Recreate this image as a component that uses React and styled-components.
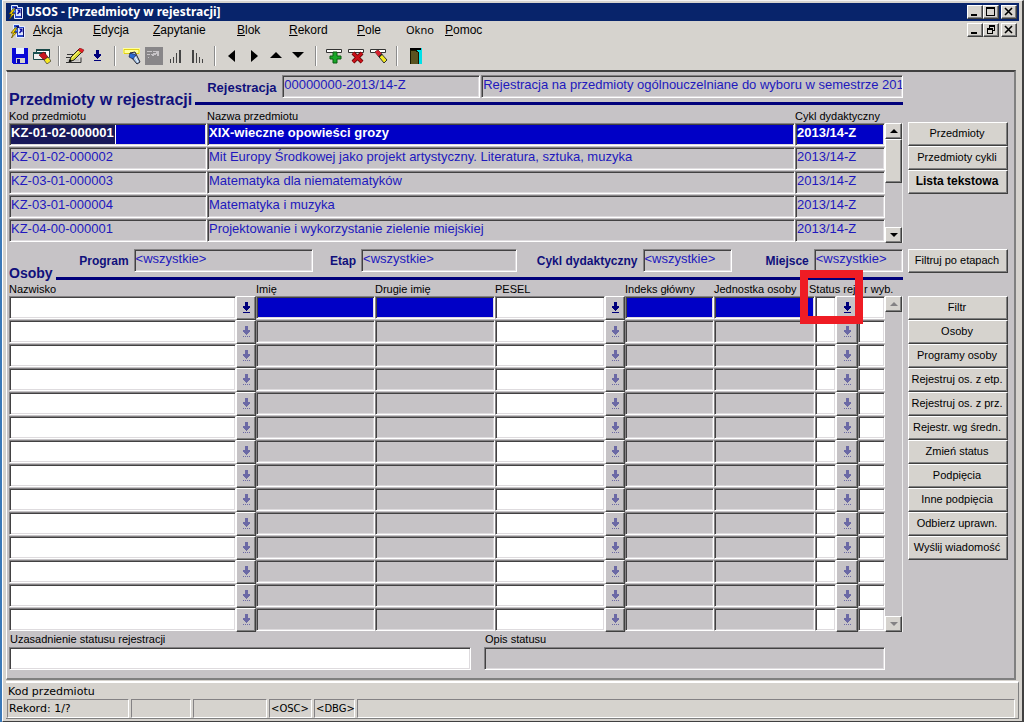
import React from 'react'
import styled, { createGlobalStyle, css } from 'styled-components'

const GlobalStyle = createGlobalStyle`
  * {
    box-sizing: border-box;
  }
  body {
    margin: 0;
    background: #3a78b8;
    font-family: "Liberation Sans", Arial, sans-serif;
    font-size: 11px;
    color: #000;
  }
  button, input {
    font: inherit;
    margin: 0;
    border-radius: 0;
  }
`

const raised = css`
  border: 1px solid;
  border-color: #fff #404040 #404040 #fff;
  box-shadow: inset -1px -1px 0 #808080;
`

const sunken = css`
  border: 1px solid;
  border-color: #848284 #fff #fff #848284;
  box-shadow: inset 1px 1px 0 #424142, inset -1px -1px 0 #dedbde;
`

const Window = styled.div`
  min-height: 100vh;
  margin-left: 2px;
  padding: 2px 3px 0;
  display: flex;
  flex-direction: column;
  background: #d6d3ce;
  border-top: 1px solid #f2f2f2;
  border-left: 1px solid #fff;
  border-right: 2px solid #404040;
  border-bottom: 1px solid #404040;
`

const TitleBar = styled.header`
  display: flex;
  align-items: center;
  height: 18px;
  padding: 0 2px 0 2px;
  background: #08246b;
  color: #fff;
`

const TitleText = styled.h1`
  flex: 1;
  margin: 0 0 0 2px;
  font-family: "Noto Sans", sans-serif;
  font-size: 12px;
  font-weight: bold;
  line-height: 18px;
`

const WindowButtons = styled.div`
  display: flex;
  margin-left: auto;
`

const WindowButton = styled.button`
  ${raised}
  width: 16px;
  height: 14px;
  padding: 0;
  background: #d6d3ce;
  display: flex;
  align-items: center;
  justify-content: center;
  &:last-child {
    margin-left: 2px;
  }
`

const MenuBar = styled.nav`
  display: flex;
  align-items: flex-start;
  height: 21px;
  padding: 2px 2px 0 4px;
`

const MenuItem = styled.button`
  width: ${props => props.$width}px;
  padding: 0;
  border: 0;
  background: none;
  text-align: left;
  white-space: nowrap;
  font-family: ${props => props.$system ? '"Noto Sans", sans-serif' : 'inherit'};
  font-size: ${props => props.$system ? 11 : 12}px;
  line-height: 14px;
  &:first-of-type {
    margin-left: 7px;
  }
`

const ToolBar = styled.div`
  display: flex;
  align-items: center;
  height: 28px;
  padding-left: 3px;
`

const ToolGroup = styled.div`
  display: flex;
  gap: 1px;
`

const ToolButton = styled.button`
  width: 21px;
  height: 22px;
  padding: 0;
  border: 0;
  background: none;
  display: flex;
  align-items: center;
  justify-content: center;
`

const Separator = styled.div`
  width: 2px;
  height: 20px;
  margin: 0 ${props => props.$wide ? 7 : 5}px 0 ${props => props.$wide ? 7 : 6}px;
  border-left: 1px solid #8c8c8c;
  border-right: 1px solid #fff;
`

const Canvas = styled.main`
  flex: 1;
  margin-right: 3px;
  padding: 3px 6px 0 2px;
  background: #c6c3c6;
  border-top: 2px solid #404040;
  border-left: 1px solid #fff;
  border-right: 2px solid #808080;
  border-bottom: 2px solid #808080;
`

const Section = styled.section`
  display: flex;
  gap: 5px;
`

const SectionBody = styled.div`
  flex: 1;
  min-width: 0;
`

const Side = styled.aside`
  width: 100px;
  display: flex;
  flex-direction: column;
  padding-top: ${props => props.$top}px;
`

const SideButton = styled.button`
  ${raised}
  height: 24px;
  padding: 0 2px 2px 0;
  background: #d6d3ce;
  white-space: nowrap;
  font-size: ${props => props.$strong ? 12 : 11}px;
  font-weight: ${props => props.$strong ? 'bold' : 'normal'};
`

const BlockHead = styled.div`
  display: flex;
  align-items: flex-end;
  gap: 3px;
`

const BlockTitle = styled.h2`
  margin: 0;
  color: #10107b;
  font-size: ${props => props.$small ? 14 : 16}px;
  line-height: ${props => props.$small ? 14 : 10}px;
  white-space: nowrap;
`

const BlockFields = styled.div`
  flex: 1;
  min-width: 0;
  border-bottom: 3px solid #00007b;
`

const fieldLabel = css`
  color: #10107b;
  font-weight: bold;
  white-space: nowrap;
`

const Registration = styled.div`
  display: flex;
  align-items: center;
  padding: 0 0 3px 12px;
`

const RegistrationLabel = styled.label`
  ${fieldLabel}
  width: 75px;
  font-size: 13px;
`

const Filters = styled.div`
  display: grid;
  grid-template-columns: 78px 179fr 48px 155fr 126px 89fr 82px 89fr;
  align-items: center;
  padding-bottom: 4px;
`

const FilterLabel = styled.label`
  ${fieldLabel}
  padding-right: 5px;
  text-align: right;
  font-size: 12px;
`

const Field = styled.input`
  ${sunken}
  display: block;
  width: ${props => props.$width ? props.$width + 'px' : '100%'};
  min-width: 0;
  height: 23px;
  margin-bottom: 1px;
  padding: 0 0 4px 1px;
  background: ${props => props.$editable ? '#fff' : '#c6c3c6'};
  color: #2118bd;
  font-size: 13px;
  outline: none;
  ${props => props.$current && css`
    background: #0000c6;
    color: #fff;
    font-weight: bold;
  `}
  ${props => props.$selected && css`
    background: linear-gradient(90deg, #18185a 105px, #fff 105px, #fff 106px, #0000c6 106px);
  `}
`

const WideField = styled(Field)`
  flex: 1;
  width: auto;
  margin-left: 1px;
`

const GridArea = styled.div`
  position: relative;
  display: flex;
  align-items: flex-end;
`

const Grid = styled.table`
  flex: 1;
  width: 100%;
  min-width: 0;
  table-layout: fixed;
  border-collapse: collapse;
  td, th {
    padding: 0;
  }
`

const HeadCell = styled.th`
  && {
    padding: 0 0 1px ${props => props.$indent || 0}px;
  }
  height: ${props => props.$height || 14}px;
  font-weight: normal;
  text-align: left;
  vertical-align: bottom;
  line-height: 12px;
  white-space: nowrap;
`

const ListButton = styled.button`
  ${raised}
  display: flex;
  align-items: center;
  justify-content: center;
  width: 100%;
  height: 24px;
  padding: 0 0 1px 1px;
  background: #c6c3c6;
`

const ScrollBar = styled.div`
  width: 18px;
  height: ${props => props.$height}px;
  display: flex;
  flex-direction: column;
  background: #c6c3c6;
  border-right: 1px solid #eee;
`

const ScrollButton = styled.button`
  ${raised}
  height: 16px;
  padding: 0;
  background: #d6d3ce;
  display: flex;
  align-items: center;
  justify-content: center;
`

const ScrollTrack = styled.div`
  flex: 1;
`

const ScrollThumb = styled.div`
  ${raised}
  height: 44px;
  background: #d6d3ce;
`

const Highlight = styled.div`
  position: absolute;
  top: -10px;
  right: 40px;
  width: 63px;
  height: 54px;
  border: 8px solid #ef1c24;
  pointer-events: none;
`

const Notes = styled.div`
  display: grid;
  grid-template-columns: 462fr 401fr;
  column-gap: 13px;
  padding: 0 123px 5px 0;
`

const NoteLabel = styled.label`
  display: block;
  padding-left: 1px;
  line-height: 15px;
`

const StatusArea = styled.footer`
  margin-top: 1px;
  border-top: 2px solid #fff;
  border-right: 1px solid #808080;
  border-bottom: 1px solid #808080;
  padding-right: 3px;
  margin-bottom: 2px;
  font-family: "DejaVu Sans", sans-serif;
  font-size: 11px;
`

const Hint = styled.div`
  padding-left: 2px;
  height: 16px;
  line-height: 18px;
`

const StatusBar = styled.div`
  display: flex;
  gap: 2px;
  padding-left: 1px;
`

const StatusCell = styled.div`
  ${props => props.$width ? `width: ${props.$width}px;` : 'flex: 1;'}
  height: 19px;
  padding-left: 1px;
  border: 1px solid;
  border-color: #848284 #fff #fff #848284;
  line-height: 17px;
  font-size: ${props => props.$small ? 10 : 11}px;
  white-space: nowrap;
`

const AppIcon = () => (
  <svg width="16" height="16" viewBox="0 0 16 16">
    <path d="M3.500 1.500h6v2h5v11h-8v-4h-3z" fill="#2848c8" stroke="#e8f0ff" />
    <path d="M6 3h3v2H6zM13 5h1v9h-1z" fill="#10106b" />
    <path d="M8 5h5v7H8z" fill="#dfe8ff" />
    <path d="M9 5.500h3.500v4l-1-1-1.500 2-1-1 1.500-2z" fill="#0808a0" />
    <path d="M4 4h3v4H4z" fill="#68a8d8" />
    <path d="M5 5L1 10h2.500L1.500 15 6.500 9.500H4L7 5z" fill="#ffdf00" stroke="#5a4300" strokeWidth=".7" />
  </svg>
)

const MinimizeIcon = () => (
  <svg width="10" height="10" viewBox="0 0 10 10"><path d="M1 7h6v2H1z" /></svg>
)

const MaximizeIcon = () => (
  <svg width="10" height="10" viewBox="0 0 10 10" shapeRendering="crispEdges"><path d="M0 0h9v9H0zM1 2v6h7V2z" fillRule="evenodd" /></svg>
)

const RestoreIcon = () => (
  <svg width="10" height="10" viewBox="0 0 10 10" shapeRendering="crispEdges">
    <path d="M3 0h6v6H7V5h1V2H4v1H3zM1 3h6v6H1zM2 5v3h4V5z" fillRule="evenodd" />
  </svg>
)

const CloseIcon = () => (
  <svg width="10" height="10" viewBox="0 0 10 10"><path d="M1 1l7 7M8 1L1 8" stroke="#000" strokeWidth="1.6" /></svg>
)

const SaveIcon = () => (
  <svg width="16" height="16" viewBox="0 0 16 16" shapeRendering="crispEdges">
    <path d="M0 0h15l1 1v15H1l-1-1z" fill="#0808d8" />
    <path d="M4 0h8v6H4z" fill="#e8f0ff" />
    <path d="M4 10h9v5H4z" fill="#d6d3ce" />
    <path d="M5 11h3v4H5z" fill="#0808a0" />
  </svg>
)

const ClearFormIcon = () => (
  <svg width="18" height="16" viewBox="0 0 18 16">
    <path d="M3.500 1.500h13v8h-13z" fill="#fff" stroke="#184848" />
    <path d="M3 1h14v2H3z" fill="#184848" />
    <path d="M.5 4.500h12v7H.5z" fill="#eee" stroke="#184848" />
    <path d="M0 4h13v2H0z" fill="#185050" />
    <path d="M6 7l5-3 4 5-4 3z" fill="#c81820" stroke="#600" strokeWidth=".6" />
    <path d="M11 12l4-3 3 4-4 3z" fill="#f8e820" stroke="#333" strokeWidth=".7" />
  </svg>
)

const EditIcon = () => (
  <svg width="19" height="16" viewBox="0 0 19 16">
    <path d="M1 6.500h9M0 9.500h5M0 14.500h15v-5" stroke="#333" fill="none" />
    <path d="M1 12h12" stroke="#aaa" />
    <path d="M3 14l2-5 8-8 4 2-9 9z" fill="#d8d838" stroke="#222" />
    <path d="M12 2l2-2 4 2-2 3z" fill="#e82028" stroke="#600" strokeWidth=".5" />
    <path d="M3 14l1-3 2 2z" fill="#000" />
    <path d="M6 10l7-7" stroke="#fff87a" />
  </svg>
)

const ListArrow = ({ faded }) => (
  <svg width="9" height="12" viewBox="0 0 9 12" shapeRendering="crispEdges">
    <path d="M3 0h3v4h2v2H7v1H6v1H5v1H4V8H3V7H2V6H1V4h2z" fill={faded ? '#6b69a5' : '#00007b'} />
    {faded
      ? <path d="M1 10h1v1H1zM3 10h1v1H3zM5 10h1v1H5zM7 10h1v1H7z" fill="#6b69a5" />
      : <path d="M1 10h7v1H1z" fill="#00007b" />}
  </svg>
)

const QueryIcon = () => (
  <svg width="18" height="17" viewBox="0 0 18 17">
    <path d="M0 0h17v6H0z" fill="#ffff9c" />
    <path d="M1 1.500h15v4H1z" fill="none" stroke="#e0d018" />
    <path d="M7 5l5-1 2 4 3 6-3 2-5-6z" fill="#a8c8e8" stroke="#223" />
    <path d="M7 5l-1 4 4 2 3-4z" fill="#286cd8" stroke="#113" strokeWidth=".6" />
    <path d="M12 9l3 5" stroke="#f8f8ff" />
  </svg>
)

const DisabledIcon = () => (
  <svg width="18" height="18" viewBox="0 0 18 18" shapeRendering="crispEdges">
    <path d="M0 0h18v18H0z" fill="#888688" />
    <path d="M2 4h5v1H2zM2 7h3v1H2zM3 10h1v1H3zM8 4h6v5h-2V7h-1v1h-2v1H7V8H6V7h2V6h3V5H8z" fill="#c6c3c6" />
  </svg>
)

const SortUpIcon = () => (
  <svg width="12" height="14" viewBox="0 0 12 14" shapeRendering="crispEdges">
    <path d="M0 10h1v4H0zM3 8h1v6H3zM6 4h1v10H6zM9 1h2v13H9z" fill="#444" />
  </svg>
)

const SortDownIcon = () => (
  <svg width="12" height="14" viewBox="0 0 12 14" shapeRendering="crispEdges">
    <path d="M0 1h2v13H0zM4 4h1v10H4zM7 8h1v6H7zM10 10h1v4h-1z" fill="#444" />
  </svg>
)

const Arrow = ({ d, width = 14, height = 14, fill = '#000' }) => (
  <svg width={width} height={height} viewBox={`0 0 ${width} ${height}`}><path d={d} fill={fill} /></svg>
)

const InsertIcon = () => (
  <svg width="17" height="16" viewBox="0 0 17 16">
    <path d="M.5 1.500h15v3H.5z" fill="#fff" stroke="#333" />
    <path d="M7 4h4v4h4v3h-4v4H7v-4H4V8h3z" fill="#18a828" stroke="#085a10" />
  </svg>
)

const DeleteIcon = () => (
  <svg width="17" height="16" viewBox="0 0 17 16">
    <path d="M.5 1.500h15v3H.5z" fill="#fff" stroke="#333" />
    <path d="M5 5l9 9M14 5l-9 9" stroke="#500" strokeWidth="4" />
    <path d="M5 5l9 9M14 5l-9 9" stroke="#c81018" strokeWidth="2.600" />
  </svg>
)

const EraseIcon = () => (
  <svg width="18" height="16" viewBox="0 0 18 16">
    <path d="M.5 1.500h15v3H.5z" fill="#fff" stroke="#333" />
    <path d="M5 4l3-2 9 10-3 3z" fill="#f0e820" stroke="#333" />
    <path d="M5 4l3-2 4 4-3 3z" fill="#d82030" />
    <path d="M9 9l3-3" stroke="#222" strokeWidth="1.500" />
  </svg>
)

const ExitIcon = () => (
  <svg width="12" height="16" viewBox="0 0 12 16" shapeRendering="crispEdges">
    <path d="M0 0h12v16H0z" fill="#00e0e8" />
    <path d="M0 0h11v2H0z" fill="#000" />
    <path d="M0 2h5l3 2v12H0z" fill="#5a5420" stroke="#181800" />
  </svg>
)

const menu = [
  { label: 'Akcja', width: 60 },
  { label: 'Edycja', width: 60 },
  { label: 'Zapytanie', width: 84 },
  { label: 'Blok', width: 52 },
  { label: 'Rekord', width: 68 },
  { label: 'Pole', width: 49 },
  { label: 'Okno', width: 39, system: true },
  { label: 'Pomoc', width: 50 },
]

const tools = [
  [['Zapisz', <SaveIcon />], ['Wyczyść formularz', <ClearFormIcon />]],
  [['Edytuj', <EditIcon />], ['Lista wartości', <ListArrow />]],
  [['Zapytanie', <QueryIcon />], ['Wykonaj', <DisabledIcon />], ['Sortuj rosnąco', <SortUpIcon />], ['Sortuj malejąco', <SortDownIcon />]],
  [
    ['Poprzedni blok', <Arrow d="M10 1v12L3 7z" />],
    ['Następny blok', <Arrow d="M4 1v12l7-6z" />],
    ['Poprzedni rekord', <Arrow d="M1 9h12L7 3z" />],
    ['Następny rekord', <Arrow d="M1 3h12L7 9z" />],
  ],
  [['Wstaw rekord', <InsertIcon />], ['Usuń rekord', <DeleteIcon />], ['Wyczyść rekord', <EraseIcon />]],
  [['Wyjście', <ExitIcon />]],
]

const subjects = [
  ['KZ-01-02-000001', 'XIX-wieczne opowieści grozy'],
  ['KZ-01-02-000002', 'Mit Europy Środkowej jako projekt artystyczny. Literatura, sztuka, muzyka'],
  ['KZ-03-01-000003', 'Matematyka dla niematematyków'],
  ['KZ-03-01-000004', 'Matematyka i muzyka'],
  ['KZ-04-00-000001', 'Projektowanie i wykorzystanie zielenie miejskiej'],
]

const filters = ['Program', 'Etap', 'Cykl dydaktyczny', 'Miejsce']

// list: button with a list of values, edit: white field, show: read-only field
const personColumns = [
  { name: 'Nazwisko', kind: 'edit' },
  { name: 'Lista nazwisk', kind: 'list', width: 20 },
  { name: 'Imię', kind: 'show', width: 119 },
  { name: 'Drugie imię', kind: 'show', width: 120 },
  { name: 'PESEL', kind: 'edit', width: 110 },
  { name: 'Lista PESEL', kind: 'list', width: 20 },
  { name: 'Indeks główny', kind: 'show', width: 89 },
  { name: 'Jednostka osoby', kind: 'show', width: 101, span: 2 },
  { name: 'Status rej', kind: 'edit', width: 21 },
  { name: 'Lista statusów', kind: 'list', width: 22 },
  { name: 'r wyb.', kind: 'edit', width: 27 },
]

const personRows = Array.from({ length: 14 }, (_, i) => i)

const personActions = [
  'Filtr', 'Osoby', 'Programy osoby', 'Rejestruj os. z etp.', 'Rejestruj os. z prz.',
  'Rejestr. wg średn.', 'Zmień status', 'Podpięcia', 'Inne podpięcia', 'Odbierz uprawn.', 'Wyślij wiadomość',
]

const VerticalScroll = ({ height, disabled, children }) => {
  const fill = disabled ? '#848284' : '#000'
  return (
    <ScrollBar $height={height}>
      <ScrollButton aria-label="W górę" disabled={disabled}><Arrow width={8} height={4} d="M0 4h8L4 0z" fill={fill} /></ScrollButton>
      <ScrollTrack>{children}</ScrollTrack>
      <ScrollButton aria-label="W dół" disabled={disabled}><Arrow width={8} height={4} d="M0 0h8L4 4z" fill={fill} /></ScrollButton>
    </ScrollBar>
  )
}

const Subjects = () => (
  <Section>
    <SectionBody>
      <BlockHead>
        <BlockTitle>Przedmioty w rejestracji</BlockTitle>
        <BlockFields>
          <Registration>
            <RegistrationLabel htmlFor="registration">Rejestracja</RegistrationLabel>
            <Field id="registration" $width={198} readOnly defaultValue="00000000-2013/14-Z" />
            <WideField aria-label="Opis rejestracji" readOnly defaultValue="Rejestracja na przedmioty ogólnouczelniane do wyboru w semestrze 201" />
          </Registration>
        </BlockFields>
      </BlockHead>
      <GridArea>
        <Grid>
          <colgroup>
            <col style={{ width: 198 }} />
            <col />
            <col style={{ width: 90 }} />
          </colgroup>
          <thead>
            <tr>
              <HeadCell $height={18}>Kod przedmiotu</HeadCell>
              <HeadCell>Nazwa przedmiotu</HeadCell>
              <HeadCell>Cykl dydaktyczny</HeadCell>
            </tr>
          </thead>
          <tbody>
            {subjects.map(([code, name], i) => (
              <tr key={code}>
                <td><Field aria-label="Kod przedmiotu" defaultValue={code} readOnly $current={i === 0} $selected={i === 0} /></td>
                <td><Field aria-label="Nazwa przedmiotu" defaultValue={name} readOnly $current={i === 0} /></td>
                <td><Field aria-label="Cykl dydaktyczny" defaultValue="2013/14-Z" readOnly $current={i === 0} /></td>
              </tr>
            ))}
          </tbody>
        </Grid>
        <VerticalScroll height={120}><ScrollThumb /></VerticalScroll>
      </GridArea>
    </SectionBody>
    <Side $top={47}>
      <SideButton>Przedmioty</SideButton>
      <SideButton>Przedmioty cykli</SideButton>
      <SideButton $strong>Lista tekstowa</SideButton>
    </Side>
  </Section>
)

const PersonCell = ({ column, first }) => {
  if (column.kind === 'list') {
    return (
      <td>
        <ListButton aria-label={column.name}><ListArrow faded={!first} /></ListButton>
      </td>
    )
  }
  const editable = column.kind === 'edit'
  return (
    <td colSpan={column.span}>
      <Field aria-label={column.name} readOnly={!editable} $editable={editable} $current={first && !editable} />
    </td>
  )
}

const PeopleSection = styled(Section)`
  margin-top: 6px;
`

const PersonActions = styled.div`
  display: flex;
  flex-direction: column;
  margin-top: 23px;
`

const People = () => (
  <PeopleSection>
    <SectionBody>
      <BlockHead>
        <BlockTitle $small>Osoby</BlockTitle>
        <BlockFields>
          <Filters>
            {filters.map((name, i) => (
              <React.Fragment key={name}>
                <FilterLabel htmlFor={'filter' + i}>{name}</FilterLabel>
                <Field id={'filter' + i} readOnly defaultValue="<wszystkie>" />
              </React.Fragment>
            ))}
          </Filters>
        </BlockFields>
      </BlockHead>
      <GridArea>
        <Grid>
          <colgroup>
            <col />
            {personColumns.slice(1, 7).map(c => <col key={c.name} style={{ width: c.width }} />)}
            <col style={{ width: 95 }} />
            <col style={{ width: 6 }} />
            {personColumns.slice(8).map(c => <col key={c.name} style={{ width: c.width }} />)}
          </colgroup>
          <thead>
            <tr>
              <HeadCell $height={16} colSpan={2}>Nazwisko</HeadCell>
              <HeadCell>Imię</HeadCell>
              <HeadCell>Drugie imię</HeadCell>
              <HeadCell colSpan={2}>PESEL</HeadCell>
              <HeadCell>Indeks główny</HeadCell>
              <HeadCell>Jednostka osoby</HeadCell>
              <HeadCell colSpan={3}>Status rej</HeadCell>
              <HeadCell $indent={6}>r wyb.</HeadCell>
            </tr>
          </thead>
          <tbody>
            {personRows.map(row => (
              <tr key={row}>
                {personColumns.map(c => <PersonCell key={c.name} column={c} first={row === 0} />)}
              </tr>
            ))}
          </tbody>
        </Grid>
        <VerticalScroll height={336} disabled />
        <Highlight />
      </GridArea>
    </SectionBody>
    <Side>
      <SideButton>Filtruj po etapach</SideButton>
      <PersonActions>
        {personActions.map(name => <SideButton key={name}>{name}</SideButton>)}
      </PersonActions>
    </Side>
  </PeopleSection>
)

const App = () => {
  return (
    <>
      <GlobalStyle />
      <Window>
        <TitleBar>
          <AppIcon />
          <TitleText>USOS - [Przedmioty w rejestracji]</TitleText>
          <WindowButtons>
            <WindowButton aria-label="Minimalizuj"><MinimizeIcon /></WindowButton>
            <WindowButton aria-label="Maksymalizuj"><MaximizeIcon /></WindowButton>
            <WindowButton aria-label="Zamknij"><CloseIcon /></WindowButton>
          </WindowButtons>
        </TitleBar>
        <MenuBar>
          <AppIcon />
          {menu.map(item => (
            <MenuItem key={item.label} $width={item.width} $system={item.system}>
              {item.system ? item.label : <><u>{item.label[0]}</u>{item.label.slice(1)}</>}
            </MenuItem>
          ))}
          <WindowButtons>
            <WindowButton aria-label="Minimalizuj formularz"><MinimizeIcon /></WindowButton>
            <WindowButton aria-label="Przywróć formularz"><RestoreIcon /></WindowButton>
            <WindowButton aria-label="Zamknij formularz"><CloseIcon /></WindowButton>
          </WindowButtons>
        </MenuBar>
        <ToolBar>
          {tools.map((group, i) => (
            <React.Fragment key={i}>
              {i > 0 && <Separator $wide={i > 3} />}
              <ToolGroup>
                {group.map(([name, icon]) => <ToolButton key={name} aria-label={name}>{icon}</ToolButton>)}
              </ToolGroup>
            </React.Fragment>
          ))}
        </ToolBar>
        <Canvas>
          <Subjects />
          <People />
          <Notes>
            <div>
              <NoteLabel htmlFor="reason">Uzasadnienie statusu rejestracji</NoteLabel>
              <Field id="reason" $editable />
            </div>
            <div>
              <NoteLabel htmlFor="description">Opis statusu</NoteLabel>
              <Field id="description" readOnly />
            </div>
          </Notes>
        </Canvas>
        <StatusArea>
          <Hint>Kod przedmiotu</Hint>
          <StatusBar>
            <StatusCell $width={122}>Rekord: 1/?</StatusCell>
            <StatusCell $width={60} />
            <StatusCell $width={74} />
            <StatusCell $width={43} $small>&lt;OSC&gt;</StatusCell>
            <StatusCell $width={41} $small>&lt;DBG&gt;</StatusCell>
            <StatusCell />
          </StatusBar>
        </StatusArea>
      </Window>
    </>
  )
}

export default App
